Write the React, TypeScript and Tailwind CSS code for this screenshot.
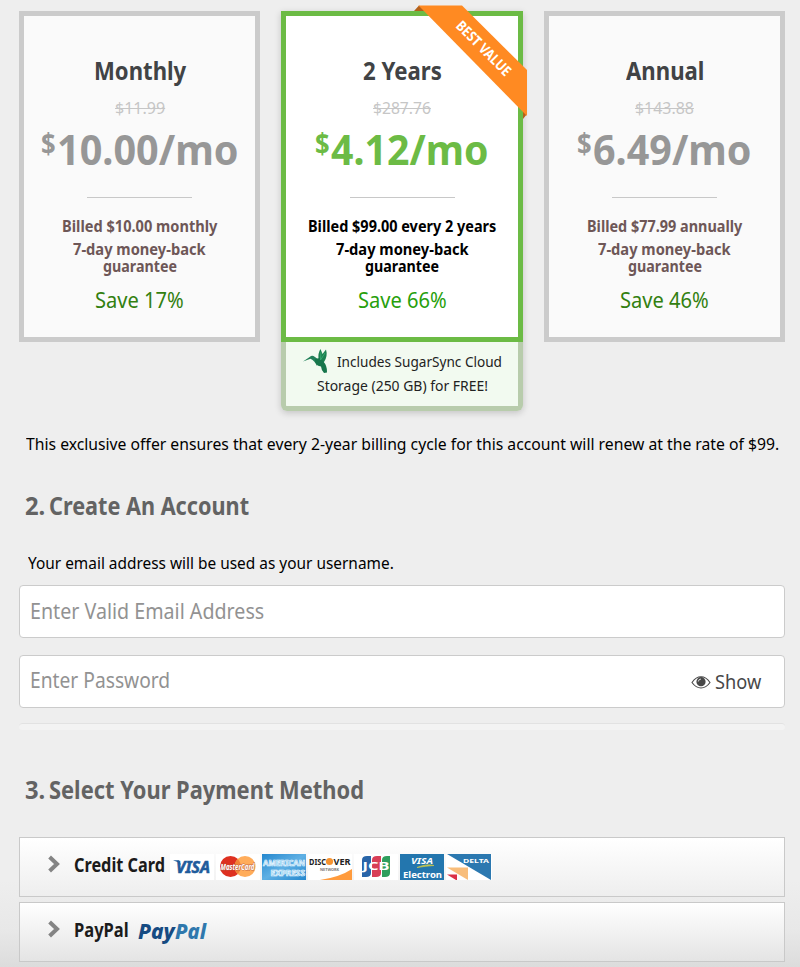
import { useLayoutEffect, useRef, type ReactNode } from "react";

/** Condenses its text horizontally so that it occupies exactly `w` pixels. */
function Fit({ w, className = "", textClass = "", children }: { w: number; className?: string; textClass?: string; children: ReactNode }) {
  const inner = useRef<HTMLSpanElement>(null);
  useLayoutEffect(() => {
    const el = inner.current;
    if (el) el.style.transform = `scaleX(${w / el.offsetWidth})`;
  }, [w]);
  return (
    <span className={`block shrink-0 whitespace-nowrap ${className}`} style={{ width: w }}>
      <span ref={inner} className={`inline-block origin-left align-top ${textClass}`}>
        {children}
      </span>
    </span>
  );
}

type Plan = {
  name: string;
  nameW: number;
  old: string;
  oldW: number;
  price: string;
  priceW: number;
  billed: string;
  billedW: number;
  save: string;
  best?: boolean;
};

const plans: Plan[] = [
  { name: "Monthly", nameW: 92, old: "$11.99", oldW: 50, price: "10.00/mo", priceW: 182, billed: "Billed $10.00 monthly", billedW: 155, save: "Save 17%" },
  { name: "2 Years", nameW: 79, old: "$287.76", oldW: 58, price: "4.12/mo", priceW: 158, billed: "Billed $99.00 every 2 years", billedW: 188, save: "Save 66%", best: true },
  { name: "Annual", nameW: 78, old: "$143.88", oldW: 59, price: "6.49/mo", priceW: 159, billed: "Billed $77.99 annually", billedW: 155, save: "Save 46%" },
];

function Ribbon() {
  return (
    <svg className="absolute left-[133px] top-[-6px]" width="116" height="116" viewBox="0 0 116 116">
      <path d="M0 6L5 .5L12 6ZM109 114L113 109L109 103Z" fill="#b4611a" />
      <path d="M4.5 .5H48L113 65V111Z" fill="#ff8a22" />
      <text
        x="70"
        y="48.5"
        transform="rotate(45 70 43)"
        textAnchor="middle"
        textLength="71"
        lengthAdjust="spacingAndGlyphs"
        fontSize="14.5"
        fontWeight="700"
        fill="#fff"
        fontFamily="Noto Sans"
      >
        BEST VALUE
      </text>
    </svg>
  );
}

function Hummingbird() {
  return (
    <svg width="26" height="26" viewBox="0 0 26 26" className="shrink-0">
      <path d="M0 13.500L7 8.800Q9 6.800 12 9L16 12L14 18Q12 13 7.500 10.800Z" fill="#23805a" />
      <path d="M15.500 11.500Q14.800 5 17.500 1L19.500 6L23 1.500Q25 8 21 14L18 18L14 15Z" fill="#1b8050" />
      <path d="M12 11Q11.500 17.500 18 18.500Q18.500 23 21 25L24 24.500Q24.500 18 20 13L17 10Z" fill="#17754b" />
      <path d="M18 4L17.500 12L22 5" stroke="#35a56d" strokeWidth="1" fill="none" />
    </svg>
  );
}

function PlanCard({ p }: { p: Plan }) {
  return (
    <div className={p.best ? "relative w-[242px] rounded-b-[6px] shadow-[0_2px_7px_rgba(0,0,0,0.18)]" : "w-[241px]"}>
      <div
        className={
          p.best
            ? "relative flex h-[331px] flex-col items-center border-[5px] border-[#6cbb45] bg-white pt-[39px]"
            : "flex h-[331px] flex-col items-center border-[5px] border-[#cbcbcb] bg-[#fafafa] pt-[39px]"
        }
      >
        <Fit w={p.nameW} className="text-[25px] font-bold leading-[30px] text-[#414345]">{p.name}</Fit>
        <Fit w={p.oldW} textClass="line-through decoration-1" className="mt-[13px] text-[17px] leading-5 text-[#c6c6c6]">{p.old}</Fit>
        <div className={p.best ? "mt-1.5 flex h-[50px] items-start gap-px font-bold text-[#6cbb45]" : "mt-1.5 flex h-[50px] items-start gap-px font-bold text-[#979797]"}>
          <Fit w={15} className="text-[29px] leading-[38px]">$</Fit>
          <Fit w={p.priceW} className="text-[42px] leading-[50px]">{p.price}</Fit>
        </div>
        <div className="mt-[23px] h-px w-[105px] bg-[#c8c8c8]" />
        <div className={p.best ? "flex flex-col items-center text-[16px] font-bold text-black" : "flex flex-col items-center text-[16px] font-bold text-[#6e5757]"}>
          <Fit w={p.billedW} className="mt-[18px] leading-5">{p.billed}</Fit>
          <Fit w={133} className="mt-[5px] leading-[17px]">7-day money-back</Fit>
          <Fit w={74} className="leading-[17px]">guarantee</Fit>
        </div>
        <Fit w={89} className={p.best ? "mt-3 text-[21px] leading-[26px] text-[#27a00c]" : "mt-3 text-[21px] leading-[26px] text-[#328010]"}>{p.save}</Fit>
      </div>
      {p.best && (
        <div className="flex h-[69px] flex-col items-center rounded-b-[6px] border-[5px] border-t-0 border-[#b8ccac] bg-[#f2faf0] pt-[7px] text-[15px] leading-6 text-[#222]">
          <div className="flex h-6 items-center gap-2">
            <Hummingbird />
            <Fit w={165}>Includes SugarSync Cloud</Fit>
          </div>
          <Fit w={171}>Storage (250 GB) for FREE!</Fit>
        </div>
      )}
      {p.best && <Ribbon />}
    </div>
  );
}

function CardLogos() {
  const t = { fontFamily: "Noto Sans", fontWeight: 700, lengthAdjust: "spacingAndGlyphs" as const };
  return (
    <div className="ml-[5px] flex gap-[2px]">
      <svg width="44" height="26" viewBox="0 0 44 26">
        <path d="M0 0H44V26H0Z" fill="#fff" />
        <text {...t} x="6" y="18.500" fontSize="16.500" fontStyle="italic" textLength="34" fill="#1f5c9c" stroke="#1f5c9c" strokeWidth=".6">VISA</text>
        <path d="M3 6.200H9L11 11Q8 7.500 3 6.200Z" fill="#1f5c9c" />
      </svg>
      <svg width="44" height="26" viewBox="0 0 44 26">
        <path d="M0 0H44V26H0Z" fill="#fff" />
        <circle cx="14.500" cy="12.500" r="10.500" fill="#de3020" />
        <circle cx="29" cy="12.500" r="10.500" fill="#ffac5a" />
        <path d="M21.700 5A10.500 10.500 0 0 1 21.700 20A10.500 10.500 0 0 1 21.700 5" fill="#f28338" />
        <text {...t} x="4.500" y="15.800" fontSize="8.500" fontStyle="italic" textLength="34" fill="#fff" stroke="#b5563e" strokeWidth=".8" paintOrder="stroke">MasterCard</text>
      </svg>
      <svg width="44" height="26" viewBox="0 0 44 26">
        <defs>
          <linearGradient id="amex" x1="0" y1="0" x2="1" y2="1">
            <stop offset="0" stopColor="#2487ce" />
            <stop offset=".5" stopColor="#5fb0e4" />
            <stop offset="1" stopColor="#2487ce" />
          </linearGradient>
        </defs>
        <path d="M0 0H44V26H0Z" fill="url(#amex)" />
        <text {...t} x="1" y="11.500" fontSize="8" textLength="42" fill="#5fb0e4" stroke="#e9f7ff" strokeWidth=".7">AMERICAN</text>
        <text {...t} x="8.500" y="21.500" fontSize="8" textLength="34.500" fill="#5fb0e4" stroke="#e9f7ff" strokeWidth=".7">EXPRESS</text>
      </svg>
      <svg width="44" height="26" viewBox="0 0 44 26">
        <path d="M0 0H44V26H0Z" fill="#fff" />
        <path d="M12 26Q32 23 44 15V26Z" fill="#ff9b3d" />
        <text {...t} x="1" y="10.500" fontSize="8.500" textLength="17" fill="#222">DISC</text>
        <circle cx="21.500" cy="7.500" r="3.600" fill="#f69432" />
        <text {...t} x="25.500" y="10.500" fontSize="8.500" textLength="17" fill="#222">VER</text>
        <text {...t} x="12" y="16.800" fontSize="3.500" textLength="19" fill="#777">NETWORK</text>
      </svg>
      <svg width="44" height="26" viewBox="0 0 44 26">
        <path d="M0 0H44V26H0Z" fill="#fff" />
        <path d="M8 6Q8 2 13 2H17V19Q17 23 12 23H8Z" fill="#2865a8" />
        <path d="M18 6Q18 2 23 2H27V19Q27 23 22 23H18Z" fill="#d83e57" />
        <path d="M28 6Q28 2 33 2H36V19Q36 23 31 23H28Z" fill="#2f9e5d" />
        <text {...t} x="8.500" y="16" fontSize="10" textLength="27" fill="#fff">JCB</text>
      </svg>
      <svg width="44" height="26" viewBox="0 0 44 26">
        <path d="M0 0H44V26H0Z" fill="#2376ae" />
        <text {...t} x="11" y="9.500" fontSize="9" fontStyle="italic" textLength="22" fill="#fff">VISA</text>
        <path d="M17 13.500Q27 9.500 34 11.500Q26 12 17 13.500" stroke="#c5c54d" strokeWidth=".7" fill="#c5c54d" />
        <text {...t} x="3" y="23.500" fontSize="9.500" textLength="39" fill="#fff">Electron</text>
      </svg>
      <svg width="46" height="26" viewBox="0 0 46 26">
        <path d="M0 0H46V26H0Z" fill="#fff" />
        <path d="M1 0H45V26Z" fill="#2b78b0" />
        <path d="M1 13.500H22V26Z" fill="#f8bd7b" />
        <path d="M1 20.500H11V26H10Z" fill="#db3147" />
        <text {...t} x="17" y="9" fontSize="6" textLength="26" fill="#fff">DELTA</text>
      </svg>
    </div>
  );
}

function Chevron() {
  return (
    <svg width="12" height="18" viewBox="0 0 12 18" className="shrink-0">
      <path d="M1.600 2L9 9L1.600 16" fill="none" stroke="#848484" strokeWidth="4" />
    </svg>
  );
}

function Eye() {
  return (
    <svg width="20" height="14" viewBox="0 0 20 14" className="shrink-0">
      <path d="M1 7.500Q5 1.800 10 1.800T19 7.500Q15 13 10 13T1 7.500Z" fill="#fff" stroke="#484848" strokeWidth="1.100" />
      <circle cx="10" cy="6.700" r="4.600" fill="#484848" />
      <path d="M7.300 6.500Q7.500 4.200 10 4" stroke="#ddd" strokeWidth="1" fill="none" />
    </svg>
  );
}

export default function App() {
  return (
    <main className="flex h-[967px] w-[800px] flex-col overflow-hidden bg-[linear-gradient(#eeeeee_0,#eeeeee_880px,#e8e8e8_930px,#dcdcdc_967px)] pl-[19px] pr-[15px] pt-[11px] font-['Noto_Sans',sans-serif]">
      <section className="flex h-[400px] items-start justify-between">
        {plans.map((p) => (
          <PlanCard key={p.name} p={p} />
        ))}
      </section>
      <Fit w={753} className="ml-[7px] mt-[21px] text-[16.500px] leading-6 text-black">
        This exclusive offer ensures that every 2-year billing cycle for this account will renew at the rate of $99.
      </Fit>
      <h2 className="ml-[6px] mt-[34px] flex gap-1 text-[25px] font-bold leading-[30px] text-[#636363]">
        <Fit w={20}>2.</Fit>
        <Fit w={200}>Create An Account</Fit>
      </h2>
      <Fit w={366} className="ml-[9px] mt-[31px] text-[16px] leading-6 text-black">Your email address will be used as your username.</Fit>
      <div className="mt-[10px] flex h-[53px] items-center rounded-[4px] border border-[#cbcbcb] bg-white pb-[2px] pl-[10px] text-[21px] leading-[48px] text-[#929292]">
        <Fit w={234}>Enter Valid Email Address</Fit>
      </div>
      <div className="mt-[17px] flex h-[53px] items-center justify-between rounded-[4px] border border-[#cbcbcb] bg-white pl-[10px] pr-[23px] text-[21px] leading-[48px] text-[#929292]">
        <Fit w={140} className="pb-[3px]">Enter Password</Fit>
        <div className="flex items-center gap-1 text-[19px] text-[#484848]">
          <Eye />
          <Fit w={46}>Show</Fit>
        </div>
      </div>
      <div className="mt-[15px] h-[7px] rounded-[4px] border-t border-[#e2e2e2] bg-[#f3f3f3]" />
      <h2 className="ml-[6px] mt-[44px] flex gap-1 text-[25px] font-bold leading-[30px] text-[#636363]">
        <Fit w={20}>3.</Fit>
        <Fit w={315}>Select Your Payment Method</Fit>
      </h2>
      <div className="mt-[33px] flex h-[60px] items-center border border-[#c9c9c9] bg-linear-to-b from-white to-[#eeeeee] pl-[28px] text-[19.500px] font-bold leading-7 text-[#1b1b1b]">
        <span className="-mt-1.5"><Chevron /></span>
        <Fit w={91} className="-mt-1 ml-[14px]">Credit Card</Fit>
        <CardLogos />
      </div>
      <div className="mt-[5px] flex h-[60px] items-center border border-[#c9c9c9] bg-linear-to-b from-white to-[#e4e4e4] pl-[28px] text-[19.500px] font-bold leading-7 text-[#1b1b1b]">
        <span className="-mt-1.5"><Chevron /></span>
        <Fit w={55} className="-mt-1 ml-[14px]">PayPal</Fit>
        <div className="ml-[9px] mt-[-2px] flex text-[21px] font-extrabold italic">
          <Fit w={37} className="text-[#164b82]">Pay</Fit>
          <Fit w={31} className="text-[#2f78ad]">Pal</Fit>
        </div>
      </div>
    </main>
  );
}
